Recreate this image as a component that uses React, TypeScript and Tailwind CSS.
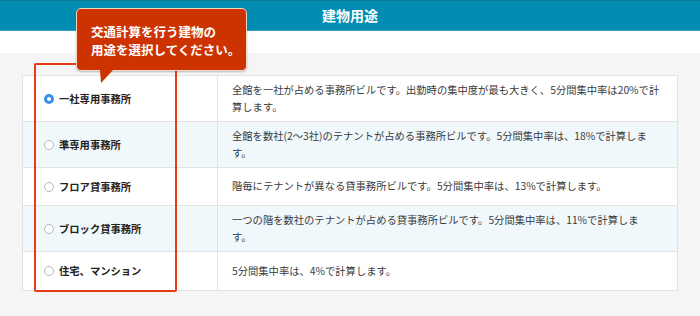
import React from "react";

type Row = { label: string; lines: string[]; selected?: boolean; tint?: boolean };

const rows: Row[] = [
  {
    label: "一社専用事務所",
    lines: [
      "全館を一社が占める事務所ビルです。出勤時の集中度が最も大きく、5分間集中率は20%で計",
      "算します。",
    ],
    selected: true,
  },
  {
    label: "準専用事務所",
    lines: [
      "全館を数社(2〜3社)のテナントが占める事務所ビルです。5分間集中率は、18%で計算しま",
      "す。",
    ],
    tint: true,
  },
  {
    label: "フロア貸事務所",
    lines: ["階毎にテナントが異なる貸事務所ビルです。5分間集中率は、13%で計算します。"],
  },
  {
    label: "ブロック貸事務所",
    lines: [
      "一つの階を数社のテナントが占める貸事務所ビルです。5分間集中率は、11%で計算しま",
      "す。",
    ],
    tint: true,
  },
  {
    label: "住宅、マンション",
    lines: ["5分間集中率は、4%で計算します。"],
  },
];

function Radio({ on }: { on?: boolean }) {
  if (on) {
    return (
      <span className="flex h-[10px] w-[10px] shrink-0 items-center justify-center rounded-full bg-[#3b8fe6]">
        <span className="h-[4px] w-[4px] rounded-full bg-white" />
      </span>
    );
  }
  return <span className="h-[10px] w-[10px] shrink-0 rounded-full border border-[#b9b9b9] bg-white" />;
}

export default function App() {
  return (
    <div
      className="relative h-[316px] w-[700px] overflow-hidden bg-white"
      style={{ fontFamily: '"Noto Sans CJK JP", "Noto Sans", sans-serif' }}
    >
      <div className="flex h-[31px] items-center justify-center border-t border-[#0b7896] border-b border-b-[#2f9fc0] bg-[#008db1] text-[14px] font-bold text-white">
        建物用途
      </div>
      <div className="h-[22px]" />
      <div className="h-[263px] bg-[#f5f5f5] px-[22px] pt-[22px]">
        <div className="border border-[#e2e2e2] bg-white">
          {rows.map((r, i) => (
            <div
              key={i}
              className={`flex min-h-[38px] ${i < rows.length - 1 ? "border-b border-[#e2e2e2]" : ""} ${
                r.tint ? "bg-[#f1f8fb]" : "bg-white"
              }`}
            >
              <div className="flex w-[195px] shrink-0 items-center gap-[5px] border-r border-[#e2e2e2] pl-[21px]">
                <Radio on={r.selected} />
                <span className="text-[10.3px] font-bold text-[#222]">{r.label}</span>
              </div>
              <div className="flex flex-1 flex-col justify-center py-[6px] pl-[14px] text-[10.3px] leading-[16.5px] text-[#3a3a3a]">
                {r.lines.map((l, j) => (
                  <div key={j} className="whitespace-nowrap">
                    {l}
                  </div>
                ))}
              </div>
            </div>
          ))}
        </div>
      </div>

      {/* red highlight box */}
      <div className="absolute left-[34px] top-[63px] h-[229px] w-[143px] rounded-[2px] border-2 border-[#e63c14]" />

      {/* tooltip */}
      <div className="absolute left-[76px] top-[8px] h-[63px] w-[171px] rounded-[5px] border border-[#f6d9cc] bg-[#cc3300] pl-[14px] pt-[14px] text-[12.5px] font-bold leading-[18px] text-white shadow-[0_1px_2px_rgba(0,0,0,0.25)]">
        <div className="whitespace-nowrap">交通計算を行う建物の</div>
        <div className="whitespace-nowrap">用途を選択してください。</div>
      </div>
      <svg className="absolute left-[99px] top-[70px]" width="16" height="15" viewBox="0 0 16 15">
        <polygon points="1,0 14,0 2,13" fill="#cc3300" />
      </svg>
    </div>
  );
}
